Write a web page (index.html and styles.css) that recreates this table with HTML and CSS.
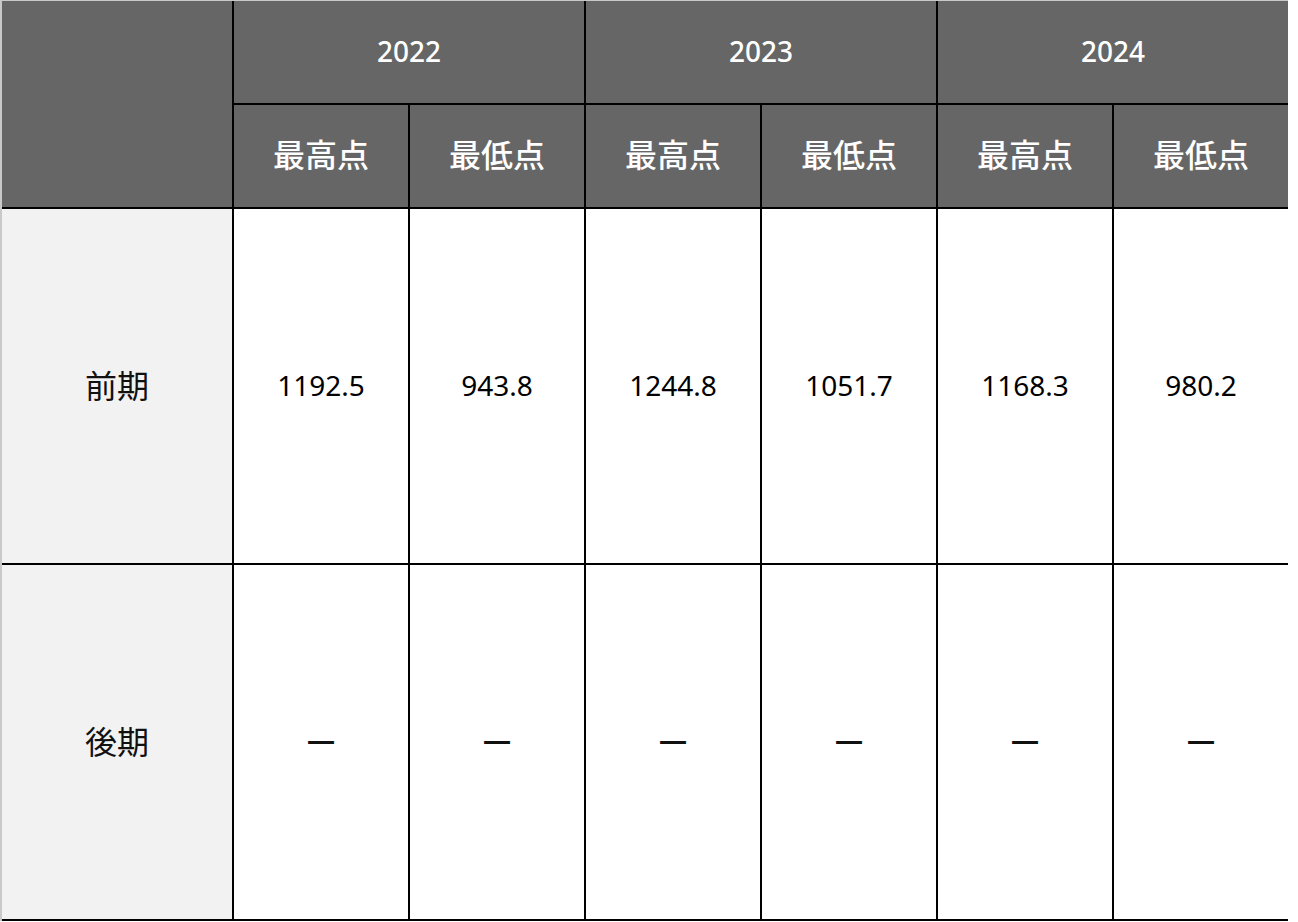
FILE: index.html
```html
<!DOCTYPE html>
<html lang="ja">
<head>
<meta charset="utf-8">
<link rel="stylesheet" href="styles.css">
</head>
<body>
<div class="grid">
  <div class="cell head corner"></div>
  <div class="cell head year">2022</div>
  <div class="cell head year">2023</div>
  <div class="cell head year">2024</div>
  <div class="cell head sub">最高点</div>
  <div class="cell head sub">最低点</div>
  <div class="cell head sub">最高点</div>
  <div class="cell head sub">最低点</div>
  <div class="cell head sub">最高点</div>
  <div class="cell head sub">最低点</div>

  <div class="cell label">前期</div>
  <div class="cell num">1192.5</div>
  <div class="cell num">943.8</div>
  <div class="cell num">1244.8</div>
  <div class="cell num">1051.7</div>
  <div class="cell num">1168.3</div>
  <div class="cell num">980.2</div>

  <div class="cell label">後期</div>
  <div class="cell dash">—</div>
  <div class="cell dash">—</div>
  <div class="cell dash">—</div>
  <div class="cell dash">—</div>
  <div class="cell dash">—</div>
  <div class="cell dash">—</div>
</div>
</body>
</html>
```
FILE: styles.css
```css
html, body {
  margin: 0;
  padding: 0;
  background: #ffffff;
}
body {
  font-family: "Noto Sans", "Noto Sans CJK JP", sans-serif;
}
.grid {
  display: grid;
  grid-template-columns: 230px repeat(6, 174px);
  grid-template-rows: 102px 102px 354px 354px;
  gap: 2px;
  width: 1284px;
  background: #000000;
  border-left: 2px solid #c9c9c9;
  border-top: 1px solid #c9c9c9;
  padding: 0 2px 2px 0;
}
.cell {
  display: flex;
  align-items: center;
  justify-content: center;
  background: #ffffff;
}
.head {
  background: #666666;
  color: #ffffff;
}
.corner {
  grid-row: span 2;
}
.year {
  grid-column: span 2;
  font-size: 28px;
  font-weight: 500;
  padding-bottom: 2px;
}
.sub {
  font-family: "Noto Sans CJK JP", sans-serif;
  font-size: 32px;
  font-weight: 500;
  padding-bottom: 6px;
}
.label {
  background: #f2f2f2;
  font-family: "Noto Sans CJK JP", sans-serif;
  font-size: 32px;
  color: #111111;
  padding-bottom: 4px;
}
.num {
  font-size: 28px;
  color: #000000;
  padding-bottom: 2px;
}
.dash {
  font-family: "Noto Sans CJK JP", sans-serif;
  font-size: 32px;
  font-weight: 700;
  color: #111111;
  padding-bottom: 8px;
}
```
